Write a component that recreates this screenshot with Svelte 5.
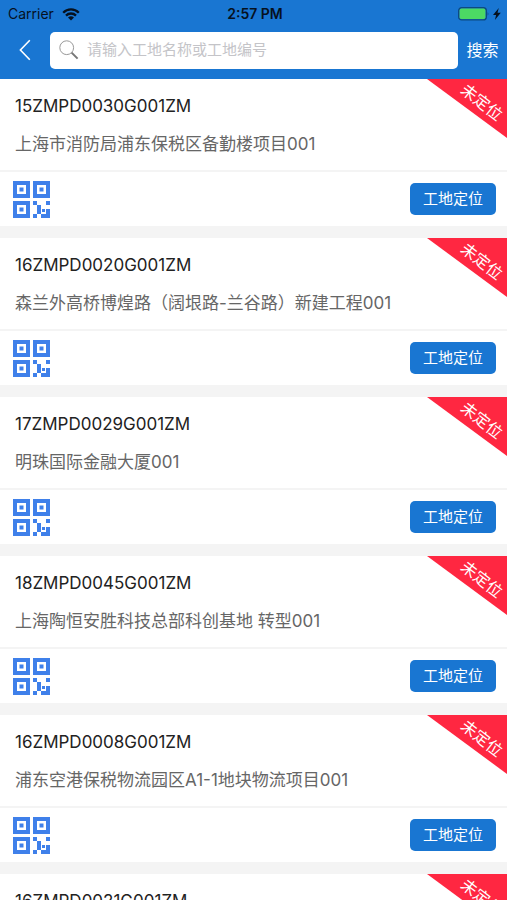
<script lang="ts">
  let keyword = $state('');

  const sites = [
    { code: '15ZMPD0030G001ZM', name: '上海市消防局浦东保税区备勤楼项目001' },
    { code: '16ZMPD0020G001ZM', name: '森兰外高桥博煌路（阔垠路-兰谷路）新建工程001' },
    { code: '17ZMPD0029G001ZM', name: '明珠国际金融大厦001' },
    { code: '18ZMPD0045G001ZM', name: '上海陶恒安胜科技总部科创基地 转型001' },
    { code: '16ZMPD0008G001ZM', name: '浦东空港保税物流园区A1-1地块物流项目001' },
    { code: '16ZMPD0021G001ZM', name: '' },
  ];
</script>

<div class="screen">
  <header>
    <div class="status-bar">
      <div class="carrier">
        <span>Carrier</span>
        <svg width="18" height="13" viewBox="0 0 18 13" aria-hidden="true">
          <path d="M1.2 4.7a11 11 0 0 1 15.6 0M4 7.6a7 7 0 0 1 10 0" fill="none" stroke="#06111f" stroke-width="2.3" />
          <path d="M9 12.6 6 9.6a4.3 4.3 0 0 1 6 0z" fill="#06111f" />
        </svg>
      </div>
      <span class="time">2:57 PM</span>
      <div class="battery">
        <svg width="44" height="14" viewBox="0 0 44 14" aria-hidden="true">
          <rect x="0.7" y="0.7" width="27.6" height="12.2" rx="3" fill="none" stroke="#0d4a80" stroke-width="1.4" />
          <rect x="1.6" y="1.6" width="25.8" height="10.4" rx="1.8" fill="#4cd964" />
          <path d="M29.6 4.8q1.6 2 0 4z" fill="#0d4a80" />
          <path d="M40.8 1 35 7.9h3.1L36.9 13 42.8 5.7h-3.3z" fill="#06111f" />
        </svg>
      </div>
    </div>
    <form class="search-bar" onsubmit={(e) => e.preventDefault()}>
      <button type="button" class="back" aria-label="返回">
        <svg width="12" height="22" viewBox="0 0 12 22">
          <path d="M10.8 1.2 1.4 11l9.4 9.8" fill="none" stroke="#fff" stroke-width="1.6" />
        </svg>
      </button>
      <label class="search-box">
        <svg width="20" height="20" viewBox="0 0 20 20" aria-hidden="true">
          <circle cx="7.7" cy="7.7" r="6.9" fill="none" stroke="#999" stroke-width="1" />
          <path d="m12.6 12.6 6 6" stroke="#777" stroke-width="2" />
        </svg>
        <input type="text" aria-label="搜索工地" placeholder="请输入工地名称或工地编号" bind:value={keyword} />
      </label>
      <button type="submit" class="search">搜索</button>
    </form>
  </header>

  <main>
    {#each sites as site}
      <article class="card">
        <div class="info">
          <h2>{site.code}</h2>
          <p>{site.name}</p>
        </div>
        <div class="actions">
          <button class="qr" aria-label="二维码">
            <svg width="37" height="37" viewBox="0 0 37 37" fill="#3f80ea">
              <path fill-rule="evenodd" d="M0 0h17v17H0zM4 4v9h9V4zM6.5 6.5h4v4h-4zM20 0h17v17H20zM24 4v9h9V4zM26.5 6.5h4v4h-4zM0 20h17v17H0zM4 24v9h9v-9zM6.5 26.5h4v4h-4z" />
              <path d="M20 20h4v4h-4zM24 24h4v9h-4zM20 33h4v4h-4zM33 20h4v4h-4zM29 28h3v3h-3zM33 28h4v9h-9v-4h5z" />
            </svg>
          </button>
          <button class="locate">工地定位</button>
        </div>
        <div class="ribbon"><span>未定位</span></div>
      </article>
    {/each}
  </main>
</div>

<style>
  :global(body) { background: #f4f4f4; }
  .screen { display: flex; flex-direction: column; height: 100vh; overflow: hidden; font-family: Inter, "Noto Sans CJK SC", sans-serif; }
  button { padding: 0; border: none; background: none; font-family: inherit; cursor: pointer; }
  svg { display: block; }
  header { flex: none; background: #1976d2; }
  .status-bar { display: grid; grid-template-columns: 1fr auto 1fr; align-items: center; height: 28px; padding: 0 5px 0 8px; color: #06111f; font-size: 14px; line-height: 28px; }
  .carrier { display: flex; align-items: center; gap: 8px; }
  .time { font-weight: 600; }
  .battery { display: flex; justify-content: flex-end; }
  .search-bar { display: flex; align-items: center; height: 44px; padding-bottom: 7px; }
  .back { display: flex; align-items: center; justify-content: center; width: 50px; height: 37px; }
  .search-box { display: flex; flex: 1; align-items: center; gap: 8px; min-width: 0; height: 37px; padding: 0 9px; border-radius: 5px; background: #fff; box-sizing: border-box; }
  .search-box svg { flex: none; }
  .search-box input { flex: 1; min-width: 0; padding: 0; border: none; outline: none; background: none; color: #333; font-family: inherit; font-size: 15px; line-height: 24px; }
  .search-box input::placeholder { color: #c4c4c8; opacity: 1; }
  .search { width: 49px; color: #fff; font-size: 16px; line-height: 24px; }
  main { flex: 1; min-height: 0; overflow-y: auto; scrollbar-width: none; }
  .card { position: relative; margin-bottom: 12px; background: #fff; }
  .info { padding: 15px 15px 14px; border-bottom: 2px solid #f4f4f4; }
  h2, p { margin: 0; font-size: 17px; font-weight: 400; line-height: 24px; }
  h2 { color: #222; }
  p { min-height: 24px; margin-top: 14px; color: #666; }
  .actions { display: flex; align-items: center; justify-content: space-between; height: 54px; padding: 0 11px 0 13px; }
  .locate { width: 86px; height: 32px; border-radius: 5px; background: #1976d2; color: #fff; font-size: 15px; line-height: 32px; }
  .ribbon { position: absolute; top: 0; right: 0; width: 80px; height: 59px; background: #ff2741; clip-path: polygon(0 0, 100% 0, 100% 100%); color: #fff; font-size: 16px; line-height: 24px; text-align: center; }
  .ribbon span { position: absolute; top: 11px; left: 31px; width: 48px; transform: rotate(38deg); }
</style>
